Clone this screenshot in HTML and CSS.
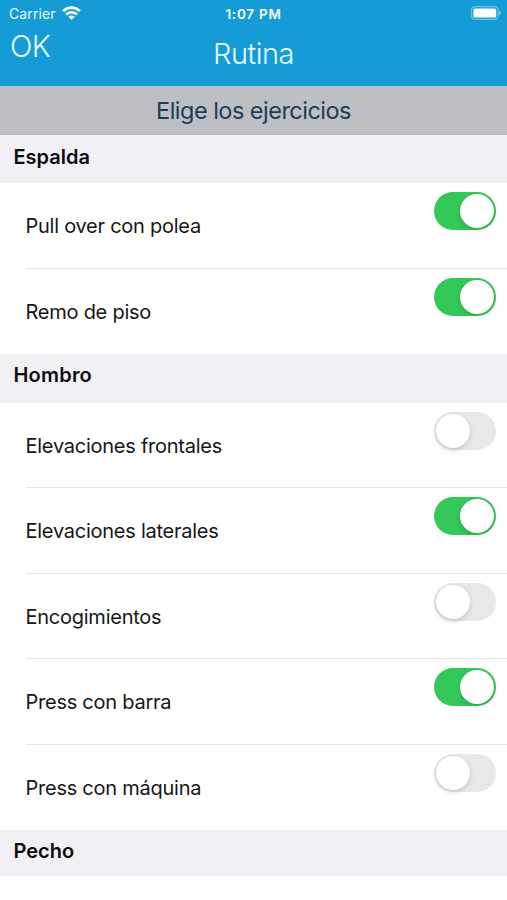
FILE: index.html
```html
<!DOCTYPE html>
<html lang="es">
<head>
<meta charset="utf-8">
<title>Rutina</title>
<link rel="stylesheet" href="styles.css">
</head>
<body>
<header class="top">
  <div class="status">
    <div class="carrier"><span class="carrier-name">Carrier</span>
      <svg class="wifi" width="19" height="14" viewBox="0 0 19 14" fill="none" stroke="#fff" stroke-width="2.6">
        <path d="M1.1 5.1C5.9.4 13.1.4 17.9 5.1M4.1 8.5c3.1-3 7.7-3 10.8 0"/>
        <path d="M9.5 13.8 6.3 10.7c1.8-1.6 4.6-1.6 6.4 0z" fill="#fff" stroke="none"/>
      </svg>
    </div>
    <span class="time">1:07 PM</span>
    <svg class="battery" width="31" height="14" viewBox="0 0 31 14">
      <rect x=".6" y=".6" width="26.4" height="12.8" rx="3.6" fill="none" stroke="#fff" stroke-opacity=".4" stroke-width="1.2"/>
      <rect x="2.4" y="2.4" width="22.8" height="9.2" rx="1.6" fill="#fff"/>
      <path d="M28.2 4.7c2 .8 2 3.8 0 4.6z" fill="#fff" fill-opacity=".45"/>
    </svg>
  </div>
  <nav class="nav"><span class="ok">OK</span><h1 class="title">Rutina</h1><span></span></nav>
</header>
<div class="prompt">Elige los ejercicios</div>
<main>
  <section>
    <h2 class="group">Espalda</h2>
    <div class="row"><span class="label">Pull over con polea</span><span class="switch on"></span></div>
    <div class="row"><span class="label">Remo de piso</span><span class="switch on"></span></div>
  </section>
  <section>
    <h2 class="group wide">Hombro</h2>
    <div class="row"><span class="label">Elevaciones frontales</span><span class="switch"></span></div>
    <div class="row"><span class="label">Elevaciones laterales</span><span class="switch on"></span></div>
    <div class="row"><span class="label">Encogimientos</span><span class="switch"></span></div>
    <div class="row"><span class="label">Press con barra</span><span class="switch on"></span></div>
    <div class="row"><span class="label">Press con máquina</span><span class="switch"></span></div>
  </section>
  <section>
    <h2 class="group last">Pecho</h2>
  </section>
</main>
</body>
</html>
```
FILE: styles.css
```css
* { box-sizing: border-box; }
body {
  margin: 0;
  height: 900px;
  overflow: hidden;
  background: #fff;
  color: #161618;
  font-family: Inter, "Liberation Sans", sans-serif;
}
.top { height: 86px; background: #159cd6; color: #fff; }
.status {
  display: grid;
  grid-template-columns: 1fr auto 1fr;
  align-items: center;
  height: 28px;
  padding: 0 6px 0 9px;
}
.carrier { display: flex; align-items: center; gap: 6px; font-size: 14px; line-height: 18px; letter-spacing: .1px; color: #e9f8ff; }
.wifi { margin-top: -2px; }
.time { font-size: 13.5px; font-weight: 600; letter-spacing: .75px; margin-right: 3px; }
.battery { justify-self: end; margin-top: -2px; margin-right: -1px; }
.nav {
  display: grid;
  grid-template-columns: 1fr auto 1fr;
  align-items: start;
  padding: 0 10px;
  font-weight: 300;
  font-size: 29px;
  line-height: 36px;
  color: #e6fbff;
}
.ok { font-size: 29.5px; letter-spacing: -.6px; }
.title { margin: 8px 0 0; font-size: 29px; font-weight: 300; letter-spacing: -.5px; }
.prompt {
  height: 49px;
  background: #bdbfc3;
  color: #1b3c59;
  font-size: 23.5px;
  line-height: 50px;
  text-align: center;
  letter-spacing: -.52px;
}
.group {
  margin: 0;
  height: 48.3px;
  padding-left: 13.5px;
  background: #f0f0f5;
  font-size: 20px;
  font-weight: 600;
  line-height: 44px;
  color: #0c0c10;
}
.group.wide { height: 48.4px; line-height: 42px; letter-spacing: .2px; }
.group.last { height: 46px; line-height: 43px; }
.row {
  display: flex;
  justify-content: space-between;
  height: 85.5px;
  margin-left: 25.5px;
  padding: 8.9px 11px 0 0;
  border-bottom: 1px solid #e6e6e8;
}
.row:last-child { border-bottom-color: transparent; }
.label { font-size: 20px; line-height: 69px; letter-spacing: -.25px; }
.switch {
  display: flex;
  width: 62.5px;
  height: 38px;
  padding: 2px;
  border-radius: 19px;
  background: #e8e8ea;
}
.switch::before {
  content: "";
  width: 34px;
  height: 34px;
  border-radius: 50%;
  background: #fff;
  box-shadow: 0 2px 5px rgba(0, 0, 0, .17);
}
.switch.on { justify-content: flex-end; background: #34c759; }
```
